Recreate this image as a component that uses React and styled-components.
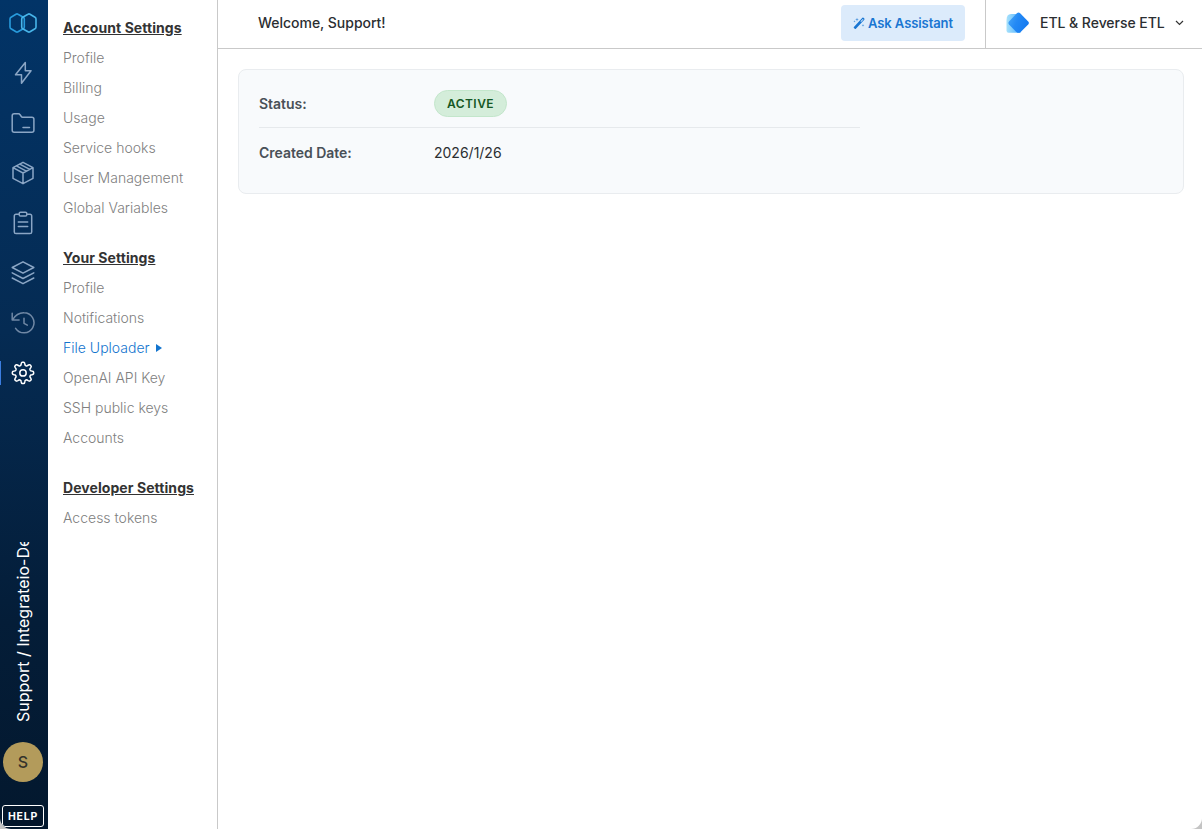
import styled, { createGlobalStyle } from "styled-components";

const GlobalStyle = createGlobalStyle`
  * {
    box-sizing: border-box;
  }
  body {
    margin: 0;
    background: #c4c4c4;
    font-family: Inter, "Liberation Sans", sans-serif;
    font-size: 14px;
    color: #2b2e31;
  }
`;

const Layout = styled.div`
  display: flex;
  height: 100vh;
  overflow: hidden;
  background: #fff;
  border-radius: 0 0 11px 11px;
`;

const Rail = styled.nav`
  display: flex;
  flex-direction: column;
  align-items: flex-start;
  width: 48px;
  flex-shrink: 0;
  background: linear-gradient(180deg, #023467 0%, #052b53 40%, #041d38 75%, #03182e 100%);
`;

const LogoLink = styled.a`
  display: flex;
  justify-content: center;
  align-items: center;
  width: 45px;
  height: 48px;
  padding-bottom: 3px;
`;

const RailItem = styled.a`
  display: flex;
  justify-content: center;
  align-items: center;
  width: 46px;
  height: 24px;
  margin: 13px 0;
  color: ${(props) => (props.$active ? "#fff" : props.$dim ? "#7088a5" : "#8ba6c5")};
  box-shadow: ${(props) => (props.$active ? "inset 1px 0 #3b7de0" : "none")};

  svg {
    fill: none;
    stroke: currentColor;
    stroke-width: 1.5;
    stroke-linecap: round;
    stroke-linejoin: round;
  }
`;

const AccountName = styled.div`
  height: 180px;
  width: 24px;
  margin: auto 0 20px 11px;
  overflow: hidden;
  writing-mode: vertical-rl;
  transform: rotate(180deg);
  white-space: nowrap;
  font-size: 16px;
  line-height: 24px;
  color: #fff;
`;

const Avatar = styled.div`
  display: flex;
  justify-content: center;
  align-items: center;
  width: 40px;
  height: 40px;
  margin: 0 0 23px 3px;
  padding-bottom: 1px;
  border-radius: 50%;
  background: #b39b5b;
  color: #34322b;
  font-size: 16px;
  font-weight: 500;
`;

const HelpButton = styled.button`
  width: 42px;
  height: 22px;
  margin: 0 0 2px 2px;
  padding: 0;
  border: 1px solid #fff;
  border-radius: 3px;
  background: #03162b;
  color: #fff;
  font-family: inherit;
  font-size: 10.5px;
  font-weight: 700;
  letter-spacing: 0.75px;
`;

const Sidebar = styled.aside`
  width: 170px;
  flex-shrink: 0;
  padding: 13px 0 0 15px;
  border-right: 1px solid #c9c9c9;
`;

const Section = styled.section`
  margin-bottom: 20px;
`;

const SectionTitle = styled.h2`
  margin: 0;
  font-size: 14px;
  font-weight: 700;
  line-height: 30px;
  letter-spacing: 0.07px;
  color: #333;
  text-decoration: underline;
  white-space: nowrap;
`;

const SideLink = styled.a`
  display: flex;
  align-items: center;
  gap: 6px;
  height: 30px;
  padding-bottom: 2px;
  font-weight: 300;
  white-space: nowrap;
  color: ${(props) => (props.$active ? "#1274ce" : "#808080")};
`;

const Caret = styled.span`
  margin-top: 2px;
  border: 4.5px solid transparent;
  border-left: 6px solid #1274ce;
  border-right: 0;
`;

const Main = styled.main`
  flex: 1;
  min-width: 0;
`;

const Header = styled.header`
  display: flex;
  align-items: center;
  height: 49px;
  border-bottom: 1px solid #c9c9c9;
`;

const Welcome = styled.div`
  margin-left: 40px;
  padding-bottom: 3px;
  font-weight: 500;
  letter-spacing: -0.03px;
`;

const AskButton = styled.button`
  display: flex;
  align-items: center;
  gap: 3px;
  height: 36px;
  width: 124px;
  margin: 0 20px 2px auto;
  padding: 0 0 0 12px;
  border: 0;
  border-radius: 4px;
  background: #dcebfb;
  color: #1976d2;
  font-family: inherit;
  font-size: 13px;
  font-weight: 600;
  letter-spacing: -0.08px;
  white-space: nowrap;
`;

const ProductSwitch = styled.div`
  display: flex;
  align-items: center;
  width: 217px;
  height: 48px;
  padding: 0 0 2px 20px;
  border-left: 1px solid #c9c9c9;
  font-weight: 500;
  white-space: nowrap;
`;

const ProductName = styled.span`
  width: 125px;
  margin: 0 10px;
  padding-bottom: 1px;
  letter-spacing: -0.04px;
`;

const Card = styled.div`
  height: 125px;
  margin: 20px 18px 0 20px;
  padding: 10px 20px;
  border: 1px solid #e9ecef;
  border-radius: 8px;
  background: #f8fafc;
`;

const Row = styled.div`
  display: flex;
  align-items: center;
  width: 601px;
  height: ${(props) => (props.$last ? "49px" : "48px")};
  border-bottom: ${(props) => (props.$last ? "0" : "1px solid #e6e9ec")};
`;

const Label = styled.div`
  width: 175px;
  font-weight: 600;
  letter-spacing: -0.03px;
  color: #495057;
`;

const Badge = styled.span`
  display: flex;
  align-items: center;
  height: 27px;
  padding: 0 12px;
  border: 1px solid #c3e6cb;
  border-radius: 14px;
  background: #d4edda;
  color: #155724;
  font-size: 12px;
  font-weight: 600;
  letter-spacing: 0.45px;
`;

// eight rounded teeth around the hub
const gearPath = () => {
  const points = [];
  for (let i = 0; i < 96; i++) {
    const a = (i / 96) * Math.PI * 2;
    const r = 9.2 + 1.5 * Math.tanh(2.2 * Math.cos(8 * a));
    points.push(`${(12 + r * Math.cos(a)).toFixed(2)} ${(11.9 + r * Math.sin(a)).toFixed(2)}`);
  }
  return `M${points.join("L")}Z`;
};

const railIcons = [
  { name: "bolt", d: "M14.3 1.5 4.5 13.8h6v8.5L20 9.7h-5.7Z" },
  {
    name: "folder",
    d: "M3.2 2.8h4.2c.8 0 1.3.3 1.7 1l1.2 1.7c.3.5.7.7 1.3.7h9.3c1.2 0 2 .8 2 2v11c0 1.2-.8 2-2 2H3.2c-1.2 0-2-.8-2-2V4.8c0-1.2.8-2 2-2ZM12 16.6h6.5",
  },
  {
    name: "package",
    d: "M12 1.3 22 6.7v10.6L12 22.7 2 17.3V6.7ZM2 6.7l10 5.3 10-5.3M12 12v10.7M8.8 3.1l10 5.3M5.4 4.9l10 5.3",
  },
  {
    name: "clipboard",
    d: "M8.2 3.2H5c-1 0-1.7.7-1.7 1.7v16c0 1 .7 1.7 1.7 1.7h14c1 0 1.7-.7 1.7-1.7v-16c0-1-.7-1.7-1.7-1.7h-3.2M9.5 1.2h5c.8 0 1.3.5 1.3 1.3v1.3c0 .8-.5 1.3-1.3 1.3h-5c-.8 0-1.3-.5-1.3-1.3V2.5c0-.8.5-1.3 1.3-1.3ZM7.3 11h9.4M7.3 15.4h9.4",
  },
  { name: "layers", d: "M12 .8 22.8 6.5 12 12.2 1.2 6.5ZM1.2 11.8 12 17.5l10.8-5.7M1.2 17 12 22.7 22.8 17" },
  { name: "history", d: "M1.2 2.3v6.6h6.9M1.6 8.7Q6 1.6 13 1.8A10 10 0 1 1 4.6 17.3M13 7.3v5l3.3 1.8", dim: true },
  { name: "settings", d: gearPath() + "M15.2 11.9a3.2 3.2 0 1 1-6.4 0 3.2 3.2 0 0 1 6.4 0Z", active: true },
];

const sections = [
  {
    title: "Account Settings",
    links: ["Profile", "Billing", "Usage", "Service hooks", "User Management", "Global Variables"],
  },
  {
    title: "Your Settings",
    links: ["Profile", "Notifications", "File Uploader", "OpenAI API Key", "SSH public keys", "Accounts"],
  },
  { title: "Developer Settings", links: ["Access tokens"] },
];

const Logo = () => (
  <svg width="28" height="20" viewBox="0 0 28 20" fill="none" strokeWidth="1.6" strokeLinejoin="round">
    <path d="M7 1.2Q8 .6 9 1.2L14.3 4.2Q15.3 4.8 15.3 6v8Q15.3 15.2 14.3 15.8L9 18.8Q8 19.4 7 18.8L2 15.8Q1 15.2 1 14V6Q1 4.8 2 4.2Z" stroke="#289bdc" />
    <path d="M19 1.2Q20 .6 21 1.2L26 4.2Q27 4.8 27 6v8Q27 15.2 26 15.8L21 18.8Q20 19.4 19 18.8L13.7 15.8Q12.7 15.2 12.7 14V6Q12.7 4.8 13.7 4.2Z" stroke="#48b5e9" />
  </svg>
);

const ProductLogo = () => (
  <svg width="24" height="24" viewBox="0 0 24 24">
    <defs>
      <linearGradient id="back" x1="0" y1="0" x2="1" y2="0">
        <stop offset="0" stopColor="#a8e2fb" />
        <stop offset="1" stopColor="#4eafff" />
      </linearGradient>
      <linearGradient id="front" x1="0" y1="0" x2="1" y2="0.4">
        <stop offset="0" stopColor="#4aa9f8" />
        <stop offset="0.5" stopColor="#2389f5" />
        <stop offset="1" stopColor="#167bf0" />
      </linearGradient>
    </defs>
    <path d="M5 3H14.5v18.7H2.5Q.5 21.7.5 19.5V9Q.5 3 5 3Z" fill="url(#back)" />
    <path d="M11.1 2Q12.5.9 13.9 2L22.2 10.4Q23.6 12 22.2 13.5L14.7 20.9Q12.5 22.7 10.3 20.9L3 13.5Q1.8 12 3 10.4Z" fill="url(#front)" />
  </svg>
);

const Wand = () => (
  <svg width="12" height="13" viewBox="0 0 12 13" fill="currentColor">
    <path d="M9.4.8q.6-.5 1.1 0l.8.8q.5.5 0 1.1L2.9 11.8q-.6.5-1.1 0L.9 11q-.5-.5 0-1.1ZM9.9 1.9 7.5 4.3l.6.6 2.4-2.4Z" fillRule="evenodd" />
    <path d="m4 .8.5 1.3 1.3.5-1.3.5L4 4.4l-.5-1.3-1.3-.5 1.3-.5ZM1.5 3.3l.3.8.8.3-.8.3-.3.8-.3-.8-.8-.3.8-.3ZM10 7l.4 1 .9.4-.9.4-.4.9-.4-.9-.9-.4.9-.4Z" opacity="0.7" />
  </svg>
);

const App = () => {
  return (
    <>
      <GlobalStyle />
      <Layout>
        <Rail>
          <LogoLink>
            <Logo />
          </LogoLink>
          {railIcons.map((icon) => (
            <RailItem key={icon.name} $active={icon.active} $dim={icon.dim}>
              <svg width="24" height="24" viewBox="0 0 24 24">
                <path d={icon.d} />
              </svg>
            </RailItem>
          ))}
          <AccountName>Support / Integrateio-De</AccountName>
          <Avatar>S</Avatar>
          <HelpButton>HELP</HelpButton>
        </Rail>
        <Sidebar>
          {sections.map((section) => (
            <Section key={section.title}>
              <SectionTitle>{section.title}</SectionTitle>
              {section.links.map((link) => (
                <SideLink key={link} $active={link === "File Uploader"}>
                  {link}
                  {link === "File Uploader" && <Caret />}
                </SideLink>
              ))}
            </Section>
          ))}
        </Sidebar>
        <Main>
          <Header>
            <Welcome>Welcome, Support!</Welcome>
            <AskButton>
              <Wand />
              Ask Assistant
            </AskButton>
            <ProductSwitch>
              <ProductLogo />
              <ProductName>ETL &amp; Reverse ETL</ProductName>
              <svg width="9" height="6" viewBox="0 0 9 6" fill="none" stroke="#333" strokeWidth="1.2">
                <path d="m1 1 3.5 3.5L8 1" />
              </svg>
            </ProductSwitch>
          </Header>
          <Card>
            <Row>
              <Label>Status:</Label>
              <Badge>ACTIVE</Badge>
            </Row>
            <Row $last>
              <Label>Created Date:</Label>
              <span>2026/1/26</span>
            </Row>
          </Card>
        </Main>
      </Layout>
    </>
  );
};

export default App;
